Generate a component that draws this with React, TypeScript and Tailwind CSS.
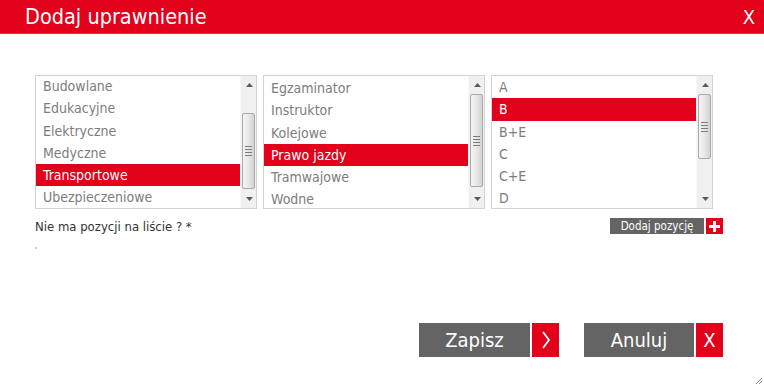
import React from "react";

const FONT = { fontFamily: '"DejaVu Sans Condensed", "DejaVu Sans", Tahoma, sans-serif' };

type ListProps = {
  items: string[];
  selected: number;
  offset: number;
  thumbTop: number;
  thumbHeight: number;
};

function Scrollbar({ thumbTop, thumbHeight }: { thumbTop: number; thumbHeight: number }) {
  return (
    <div className="relative w-[16px] h-full bg-[#f0f0f0] border-l border-[#f7f7f7]">
      <svg className="absolute left-[5px] top-[7px]" width="7" height="4" viewBox="0 0 7 4">
        <path d="M0 4 L3.5 0 L7 4 Z" fill="#5a5a5a" />
      </svg>
      <div
        className="absolute left-[1px] right-[1px] rounded-[2px] border border-[#a9a9a9] bg-gradient-to-r from-[#f4f4f4] via-[#e8e8e8] to-[#d2d2d2] flex items-center justify-center"
        style={{ top: thumbTop, height: thumbHeight }}
      >
        <div className="flex flex-col gap-[2px]">
          <div className="w-[7px] h-[1px] bg-[#7a7a7a]" />
          <div className="w-[7px] h-[1px] bg-[#7a7a7a]" />
          <div className="w-[7px] h-[1px] bg-[#7a7a7a]" />
          <div className="w-[7px] h-[1px] bg-[#7a7a7a]" />
        </div>
      </div>
      <svg className="absolute left-[5px] bottom-[7px]" width="7" height="4" viewBox="0 0 7 4">
        <path d="M0 0 L3.5 4 L7 0 Z" fill="#5a5a5a" />
      </svg>
    </div>
  );
}

function ListBox({ items, selected, offset, thumbTop, thumbHeight }: ListProps) {
  return (
    <div className="w-[222px] h-[134px] border border-[#d3d3d3] flex bg-white">
      <div className="flex-1 overflow-hidden">
        <div style={{ marginTop: offset }}>
          {items.map((it, i) => (
            <div
              key={it}
              className={
                "h-[22.3px] leading-[22px] pl-[7px] text-[14px] whitespace-nowrap " +
                (i === selected ? "bg-[#e2001a] text-white" : "text-[#7d7d7d]")
              }
            >
              {it}
            </div>
          ))}
        </div>
      </div>
      <Scrollbar thumbTop={thumbTop} thumbHeight={thumbHeight} />
    </div>
  );
}

export default function App() {
  return (
    <div className="relative w-[764px] h-[386px] bg-white overflow-hidden" style={FONT}>
      <div className="h-[34px] bg-[#e2001a] border-b border-[#3f8a22] flex items-center justify-between pl-[25px] pr-[9px]">
        <span className="text-white text-[21.5px] leading-none">Dodaj uprawnienie</span>
        <span className="text-white text-[20px] leading-none">X</span>
      </div>

      <div className="flex gap-[6px] pl-[35px] mt-[41px]">
        <ListBox
          items={["Budowlane", "Edukacyjne", "Elektryczne", "Medyczne", "Transportowe", "Ubezpieczeniowe"]}
          selected={4}
          offset={-1}
          thumbTop={37}
          thumbHeight={76}
        />
        <ListBox
          items={["Egzaminator", "Instruktor", "Kolejowe", "Prawo jazdy", "Tramwajowe", "Wodne"]}
          selected={3}
          offset={1}
          thumbTop={18}
          thumbHeight={93}
        />
        <ListBox
          items={["A", "B", "B+E", "C", "C+E", "D"]}
          selected={1}
          offset={0}
          thumbTop={18}
          thumbHeight={65}
        />
      </div>

      <div className="flex items-start justify-between pl-[35px] pr-[41px] mt-[9px]">
        <span className="text-[13px] leading-[18px] text-[#333333]">Nie ma pozycji na liście ? *</span>
        <div className="flex gap-[2px] h-[16px]">
          <div className="w-[94px] bg-[#646464] text-white text-[11.5px] leading-[16px] text-center">Dodaj pozycję</div>
          <div className="w-[17px] bg-[#e2001a] flex items-center justify-center">
            <svg width="11" height="11" viewBox="0 0 11 11">
              <rect x="4" y="0" width="3" height="11" fill="white" />
              <rect x="0" y="4" width="11" height="3" fill="white" />
            </svg>
          </div>
        </div>
      </div>

      <div className="ml-[35px] mt-[11px] w-[2px] h-[2px] bg-[#d0d0d0]" />

      <div className="flex justify-end pr-[41px] mt-[74px] gap-[25px]">
        <div className="flex gap-[2px] h-[34px]">
          <div className="w-[111px] bg-[#646464] text-white text-[20px] flex items-center justify-center">Zapisz</div>
          <div className="w-[27px] bg-[#e2001a] flex items-center justify-center">
            <svg width="10" height="18" viewBox="0 0 10 18">
              <path d="M2 1 L8 9 L2 17" stroke="white" strokeWidth="1.8" fill="none" />
            </svg>
          </div>
        </div>
        <div className="flex gap-[2px] h-[34px]">
          <div className="w-[110px] bg-[#646464] text-white text-[20px] flex items-center justify-center">Anuluj</div>
          <div className="w-[27px] bg-[#e2001a] text-white text-[20px] flex items-center justify-center">X</div>
        </div>
      </div>

      <svg className="absolute right-[1px] bottom-[1px]" width="8" height="8" viewBox="0 0 8 8">
        <path d="M7 1 L1 7 M7 4 L4 7" stroke="#8a8a8a" strokeWidth="1" />
      </svg>
    </div>
  );
}
